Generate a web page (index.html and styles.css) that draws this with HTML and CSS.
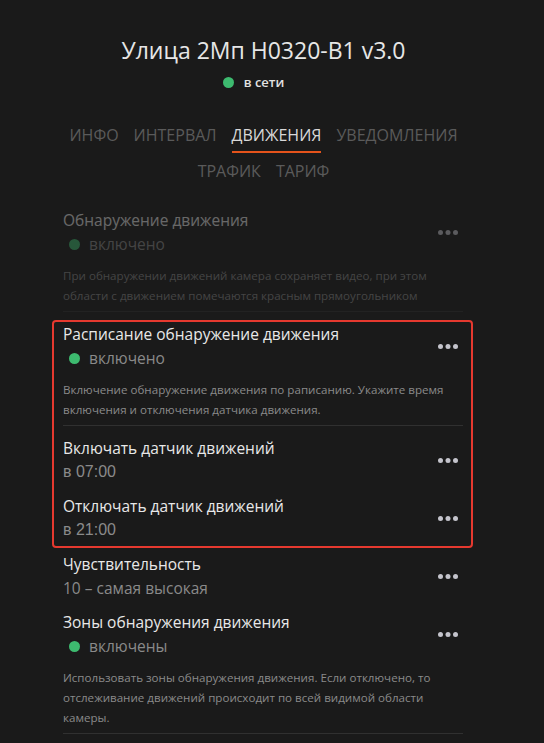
FILE: index.html
```html
<!DOCTYPE html>
<html lang="ru">
<head>
<meta charset="utf-8">
<title>Улица 2Мп H0320-B1 v3.0</title>
<link rel="stylesheet" href="styles.css">
</head>
<body>
<div class="page">
  <header class="head">
    <h1 class="title">Улица 2Мп H0320-B1 v3.0</h1>
    <div class="online"><span class="dot"></span><span>в сети</span></div>
    <nav class="tabs">
      <div class="tab-row">
        <span class="tab">ИНФО</span>
        <span class="tab">ИНТЕРВАЛ</span>
        <span class="tab active">ДВИЖЕНИЯ</span>
        <span class="tab">УВЕДОМЛЕНИЯ</span>
      </div>
      <div class="tab-row">
        <span class="tab">ТРАФИК</span>
        <span class="tab">ТАРИФ</span>
      </div>
    </nav>
  </header>

  <main class="list">
    <section class="item item-dim">
      <div class="row">
        <div class="main">
          <div class="label">Обнаружение движения</div>
          <div class="value"><span class="dot"></span>включено</div>
        </div>
        <svg class="more" viewBox="0 0 20 5"><circle cx="2.5" cy="2.5" r="2.5"/><circle cx="10" cy="2.5" r="2.5"/><circle cx="17.5" cy="2.5" r="2.5"/></svg>
      </div>
      <p class="desc">При обнаружении движений камера сохраняет видео, при этом области с движением помечаются красным прямоугольником</p>
    </section>

    <div class="group">
      <section class="item">
        <div class="row">
          <div class="main">
            <div class="label">Расписание обнаружение движения</div>
            <div class="value"><span class="dot"></span>включено</div>
          </div>
          <svg class="more" viewBox="0 0 20 5"><circle cx="2.5" cy="2.5" r="2.5"/><circle cx="10" cy="2.5" r="2.5"/><circle cx="17.5" cy="2.5" r="2.5"/></svg>
        </div>
        <p class="desc">Включение обнаружение движения по раписанию. Укажите время включения и отключения датчика движения.</p>
      </section>

      <section class="item">
        <div class="row">
          <div class="main">
            <div class="label">Включать датчик движений</div>
            <div class="value value-time">в 07:00</div>
          </div>
          <svg class="more" viewBox="0 0 20 5"><circle cx="2.5" cy="2.5" r="2.5"/><circle cx="10" cy="2.5" r="2.5"/><circle cx="17.5" cy="2.5" r="2.5"/></svg>
        </div>
      </section>

      <section class="item">
        <div class="row">
          <div class="main">
            <div class="label">Отключать датчик движений</div>
            <div class="value value-time">в 21:00</div>
          </div>
          <svg class="more" viewBox="0 0 20 5"><circle cx="2.5" cy="2.5" r="2.5"/><circle cx="10" cy="2.5" r="2.5"/><circle cx="17.5" cy="2.5" r="2.5"/></svg>
        </div>
      </section>
    </div>

    <section class="item">
      <div class="row">
        <div class="main">
          <div class="label">Чувствительность</div>
          <div class="value">10 – самая высокая</div>
        </div>
        <svg class="more" viewBox="0 0 20 5"><circle cx="2.5" cy="2.5" r="2.5"/><circle cx="10" cy="2.5" r="2.5"/><circle cx="17.5" cy="2.5" r="2.5"/></svg>
      </div>
    </section>

    <section class="item">
      <div class="row">
        <div class="main">
          <div class="label">Зоны обнаружения движения</div>
          <div class="value"><span class="dot"></span>включены</div>
        </div>
        <svg class="more" viewBox="0 0 20 5"><circle cx="2.5" cy="2.5" r="2.5"/><circle cx="10" cy="2.5" r="2.5"/><circle cx="17.5" cy="2.5" r="2.5"/></svg>
      </div>
      <p class="desc">Использовать зоны обнаружения движения. Если отключено, то отслеживание движений происходит по всей видимой области камеры.</p>
    </section>
  </main>
</div>
</body>
</html>
```

FILE: styles.css
```css
body {
  margin: 0;
  background: #1a1a1a;
  font-family: "Open Sans", "Noto Sans", sans-serif;
}

.page {
  width: 527px;
}

.head {
  text-align: center;
  padding-top: 35px;
}

.title {
  margin: 0;
  font-size: 23px;
  font-weight: 400;
  line-height: 30px;
  color: #e6e6e6;
}

.online {
  display: flex;
  justify-content: center;
  align-items: center;
  gap: 10px;
  margin-top: 7px;
  padding-right: 20px;
  height: 20px;
  font-size: 13px;
  font-weight: 600;
  color: #e2e2e2;
}

.dot {
  display: inline-block;
  width: 11px;
  height: 11px;
  border-radius: 50%;
  background: #3dba6f;
  flex: none;
}

.tabs {
  margin-top: 25px;
}

.tab-row {
  display: flex;
  justify-content: center;
  gap: 15px;
}

.tab {
  font-size: 16px;
  line-height: 20px;
  padding: 8px 0 6px;
  border-bottom: 2px solid transparent;
  color: #5a5a5a;
}

.tab.active {
  color: #d8d8d8;
  border-bottom-color: #e4531b;
}

.list {
  width: 400px;
  margin: 9px 0 0 63px;
}

.item {
  padding-top: 11px;
}

.row {
  display: flex;
  align-items: center;
}

.main {
  flex: 1;
}

.label {
  font-size: 15.5px;
  line-height: 23px;
  color: #e8e8e8;
}

.value {
  display: flex;
  align-items: center;
  font-size: 15.5px;
  line-height: 24px;
  color: #8a8a8a;
}

.value .dot {
  margin: 0 9px 0 6px;
}

.value-time {
  font-family: "Liberation Sans", Arial, sans-serif;
  font-size: 16px;
}

.more {
  width: 20px;
  height: 5px;
  margin-right: 5px;
  fill: #c4c4cc;
}

.desc {
  margin: 10px 0 0;
  padding-bottom: 5px;
  border-bottom: 1px solid #303030;
  font-size: 11.6px;
  line-height: 20px;
  color: #8a8a8a;
}

.item-dim {
  opacity: 0.38;
}

.group {
  position: relative;
}

.group::after {
  content: "";
  position: absolute;
  top: 8px;
  bottom: -6px;
  left: -11px;
  right: -10px;
  border: 2px solid #e5392f;
  border-radius: 4px;
  pointer-events: none;
}
```
